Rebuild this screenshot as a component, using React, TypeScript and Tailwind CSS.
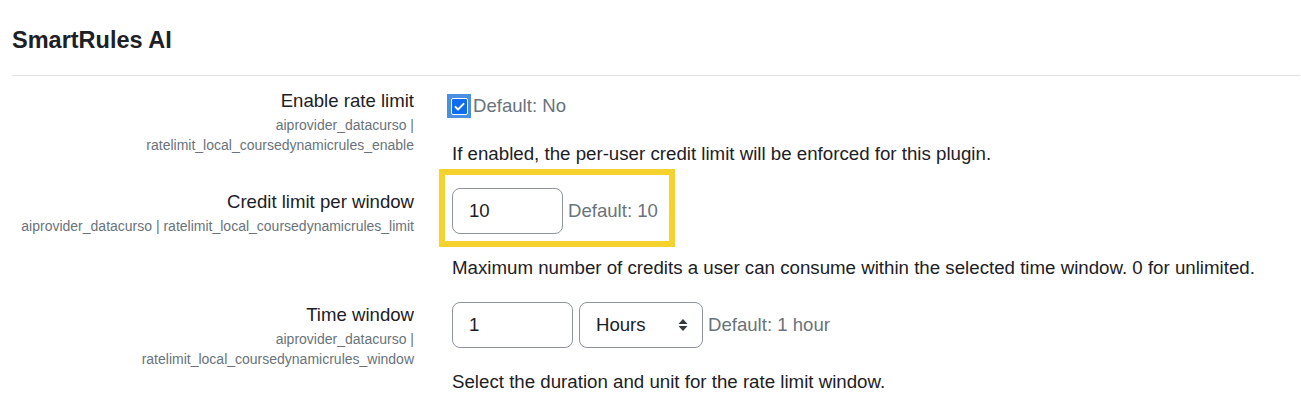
import React from "react";

const font = { fontFamily: '"Liberation Sans", Arial, sans-serif' };

function Label({ title, lines }: { title: string; lines: string[] }) {
  return (
    <div className="w-[402px] shrink-0 text-right">
      <div className="text-[18.6px] leading-[28px] text-[#1d2125]">{title}</div>
      {lines.map((l, i) => (
        <div key={i} className="text-[14px] leading-[20px] text-[#6a737b]">
          {l}
        </div>
      ))}
    </div>
  );
}

function Desc({ children }: { children: React.ReactNode }) {
  return <div className="text-[18.7px] leading-[28px] text-[#1d2125]">{children}</div>;
}

export default function App() {
  return (
    <div className="min-h-[413px] w-[1301px] bg-white pl-[12px] pr-[1px]" style={font}>
      <h3 className="pt-[26px] text-[23.5px] font-bold leading-[28px] text-[#1d2125]">SmartRules AI</h3>
      <div className="mt-[21px] border-t border-[#dee2e6]" />

      {/* Row 1 */}
      <div className="mt-[11px] flex">
        <Label title="Enable rate limit" lines={["aiprovider_datacurso |", "ratelimit_local_coursedynamicrules_enable"]} />
        <div className="ml-[38px]">
          <div className="mt-[3px] flex h-[32px] items-center">
            <span className="-ml-[5px] flex h-[24px] w-[24px] items-center justify-center bg-[#4a90e2]">
              <span className="flex h-[17px] w-[17px] items-center justify-center rounded-[2px] border border-white bg-[#0f6cf0]">
                <svg width="13" height="13" viewBox="0 0 16 16">
                  <path d="M3 8.5l3.2 3.2L13 4.8" fill="none" stroke="white" strokeWidth="2.4" strokeLinecap="round" strokeLinejoin="round" />
                </svg>
              </span>
            </span>
            <span className="ml-[2px] text-[18.6px] leading-[28px] text-[#6a737b]">Default: No</span>
          </div>
          <div className="mt-[18px]">
            <Desc>If enabled, the per-user credit limit will be enforced for this plugin.</Desc>
          </div>
        </div>
      </div>

      {/* Row 2 */}
      <div className="mt-[20px] flex">
        <Label title="Credit limit per window" lines={["aiprovider_datacurso | ratelimit_local_coursedynamicrules_limit"]} />
        <div className="ml-[38px]">
          <div className="relative flex items-center">
            <div className="pointer-events-none absolute -left-[13px] -top-[19px] h-[78px] w-[236px] border-[6px] border-[#f6d22e]" />
            <div className="flex h-[46px] w-[111px] items-center rounded-[8px] border border-[#8f959e] pl-[16px] text-[18.6px] text-[#1d2125]">
              10
            </div>
            <span className="ml-[5px] text-[18.6px] leading-[28px] text-[#6a737b]">Default: 10</span>
          </div>
          <div className="mt-[20px]">
            <Desc>
              Maximum number of credits a user can consume within the selected time window. 0 for unlimited.
            </Desc>
          </div>
        </div>
      </div>

      {/* Row 3 */}
      <div className="mt-[19px] flex">
        <Label title="Time window" lines={["aiprovider_datacurso |", "ratelimit_local_coursedynamicrules_window"]} />
        <div className="ml-[38px]">
          <div className="mt-[1px] flex items-center">
            <div className="flex h-[46px] w-[121px] items-center rounded-[8px] border border-[#8f959e] pl-[16px] text-[18.6px] text-[#1d2125]">
              1
            </div>
            <div className="ml-[6px] flex h-[46px] w-[124px] items-center justify-between rounded-[8px] border border-[#8f959e] pl-[16px] pr-[14px] text-[18.6px] text-[#1d2125]">
              <span>Hours</span>
              <svg width="10" height="14" viewBox="0 0 10 14">
                <path d="M5 1L9.5 6H0.5z" fill="#343a40" />
                <path d="M5 13L9.5 8H0.5z" fill="#343a40" />
              </svg>
            </div>
            <span className="ml-[5px] text-[18.6px] leading-[28px] text-[#6a737b]">Default: 1 hour</span>
          </div>
          <div className="mt-[20px]">
            <Desc>Select the duration and unit for the rate limit window.</Desc>
          </div>
        </div>
      </div>
    </div>
  );
}
